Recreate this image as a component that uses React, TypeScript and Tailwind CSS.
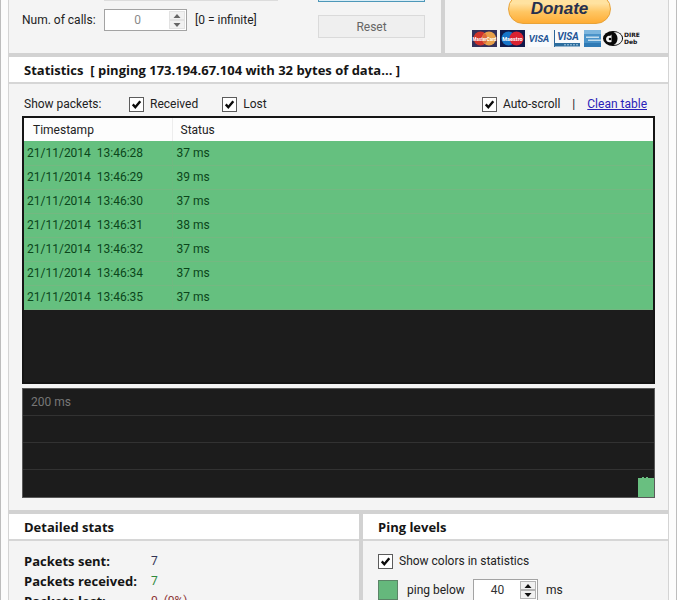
import { useState } from "react";
import type { ReactNode } from "react";

interface Packet {
  timestamp: string;
  status: string;
}

const packets: Packet[] = [
  { timestamp: "21/11/2014  13:46:28", status: "37 ms" },
  { timestamp: "21/11/2014  13:46:29", status: "39 ms" },
  { timestamp: "21/11/2014  13:46:30", status: "37 ms" },
  { timestamp: "21/11/2014  13:46:31", status: "38 ms" },
  { timestamp: "21/11/2014  13:46:32", status: "37 ms" },
  { timestamp: "21/11/2014  13:46:34", status: "37 ms" },
  { timestamp: "21/11/2014  13:46:35", status: "37 ms" },
];

const samples = [37, 37, 39, 37, 38, 37, 37, 37];

function Check({ id, label }: { id: string; label: string }) {
  const [checked, setChecked] = useState(true);
  return (
    <div className="flex items-center gap-[6px]">
      <span className="grid h-[15px] w-[15px]">
        <input
          id={id}
          type="checkbox"
          checked={checked}
          onChange={(e) => setChecked(e.target.checked)}
          className="col-start-1 row-start-1 h-[15px] w-[15px] appearance-none border border-[#5c5c5c] bg-white"
        />
        {checked && (
          <svg
            viewBox="0 0 15 15"
            className="pointer-events-none col-start-1 row-start-1 h-[15px] w-[15px]"
          >
            <path d="M3.8 7.4 6.3 10.2 11.3 4.2" fill="none" stroke="#0a0a0a" strokeWidth="2.4" />
          </svg>
        )}
      </span>
      <label htmlFor={id}>{label}</label>
    </div>
  );
}

interface SpinnerProps {
  id: string;
  label: string;
  initial: number;
  muted?: boolean;
}

function Spinner({ id, label, initial, muted }: SpinnerProps) {
  const [value, setValue] = useState(initial);
  const arrow = muted ? "#666666" : "#111111";
  const edge = muted ? "border-[#e2e2e2]" : "border-[#b4b4b4]";
  return (
    <div className="flex h-[22px] border border-[#a3a3a3] bg-white p-px">
      <input
        id={id}
        aria-label={label}
        inputMode="numeric"
        value={value}
        onChange={(e) => setValue(Number(e.target.value) || 0)}
        className={`min-w-0 flex-1 bg-white text-center outline-none ${
          muted ? "text-[#8a8a8a]" : "text-[#333333]"
        }`}
      />
      <div className="flex w-4 flex-col">
        <button
          aria-label={`Increase ${label}`}
          onClick={() => setValue(value + 1)}
          className={`flex flex-1 items-center justify-center border bg-[#f1f1f1] ${edge}`}
        >
          <svg viewBox="0 0 8 4" className="h-1 w-2">
            <path d="M0.500 4 4 0 7.500 4z" fill={arrow} />
          </svg>
        </button>
        <button
          aria-label={`Decrease ${label}`}
          onClick={() => setValue(Math.max(0, value - 1))}
          className={`flex flex-1 items-center justify-center border bg-[#f1f1f1] ${edge}`}
        >
          <svg viewBox="0 0 8 4" className="h-1 w-2">
            <path d="M0.500 0 4 4 7.500 0z" fill={arrow} />
          </svg>
        </button>
      </div>
    </div>
  );
}

function SectionTitle({ children }: { children: ReactNode }) {
  return (
    <h2 className="flex h-[27px] items-center border-b-2 border-[#d6d6d6] bg-white px-[15px] font-['Open_Sans','Noto_Sans',sans-serif] text-[13px] font-bold whitespace-pre text-[#151515]">
      {children}
    </h2>
  );
}

function PaymentCards() {
  return (
    <svg viewBox="0 0 170 17" className="h-[17px] w-[170px]" role="img" aria-label="Accepted cards">
      {/* MasterCard */}
      <rect x="0" y="0" width="25" height="17" fill="#33305a" />
      <circle cx="8.500" cy="8.500" r="7" fill="#d0342c" />
      <circle cx="17" cy="8.500" r="7" fill="#e8a04a" />
      <path d="M12.800 3a7 7 0 0 1 0 11a7 7 0 0 1 0-11z" fill="#dc6a3a" />
      <text x="12.500" y="10.500" fontSize="4.500" fontWeight="700" textAnchor="middle" fill="#fff">MasterCard</text>
      {/* Maestro */}
      <rect x="28" y="0" width="25" height="17" fill="#101a4c" />
      <circle cx="36.500" cy="8.500" r="7" fill="#1674c8" />
      <circle cx="44.500" cy="8.500" r="7" fill="#d92231" />
      <text x="40.500" y="10.500" fontSize="5.500" fontWeight="700" textAnchor="middle" fill="#fff">Maestro</text>
      {/* Visa */}
      <rect x="56" y="0" width="23" height="17" fill="#f8fafc" />
      <text x="67" y="12" fontSize="9.500" fontWeight="700" fontStyle="italic" textAnchor="middle" fill="#1f5596">VISA</text>
      {/* Visa Electron */}
      <rect x="82" y="0" width="26" height="17" fill="#f8fafc" />
      <rect x="82" y="0" width="1" height="17" fill="#2d6598" />
      <text x="96" y="10" fontSize="10" fontWeight="700" fontStyle="italic" textAnchor="middle" fill="#1f5596">VISA</text>
      <rect x="82" y="13" width="26" height="3.500" fill="#2c6d9e" />
      <path d="M92 14.800h14" stroke="#a9cce2" strokeWidth="1" strokeDasharray="2 1" />
      {/* American Express */}
      <rect x="112" y="0" width="17" height="17" fill="#4a93c9" />
      <rect x="112" y="0" width="17" height="4" fill="#7db6de" />
      <rect x="112" y="13" width="17" height="4" fill="#2f7ab5" />
      <path d="M114 7.200h13M116 10.200h13" stroke="#c3deef" strokeWidth="1.600" />
      {/* Direct Debit */}
      <ellipse cx="141" cy="8.500" rx="10" ry="7.500" fill="#080808" />
      <path d="M141.500 2c6 0 8.500 3 8.500 6.500s-3 6.500-8.500 6.500c3-1.500 4-4 4-6.500s-1-5-4-6.500z" fill="#f5f5f5" />
      <path d="M139.500 4.500v7.500c-3 1-5.500-.5-5.500-3s2.500-4 4-3z" fill="#f5f5f5" />
      <circle cx="138" cy="9" r="1.300" fill="#080808" />
      <text x="152" y="7" fontSize="6" fontWeight="700" fontFamily="DejaVu Sans" fill="#111">DIRE</text>
      <text x="152" y="14" fontSize="6" fontWeight="700" fontFamily="DejaVu Sans" fill="#111">Deb</text>
    </svg>
  );
}

function TopBar() {
  return (
    <div className="-mt-6 flex bg-[#f4f4f4]">
      <div className="flex flex-1 items-start justify-between border-r-4 border-[#d2d2d2] pr-4 pl-[13px]">
        <div className="flex flex-col gap-2">
          <input
            aria-label="Address"
            disabled
            className="ml-[82px] h-[25px] w-[174px] border border-[#dcdcdc] bg-[#f0f0f0]"
          />
          <div className="flex items-center">
            <label htmlFor="calls" className="w-[82px] whitespace-nowrap">
              Num. of calls:
            </label>
            <div className="w-[83px]">
              <Spinner id="calls" label="Num. of calls" initial={0} muted />
            </div>
            <span className="ml-2">[0 = infinite]</span>
          </div>
        </div>
        <div className="flex w-[107px] flex-col gap-[13px]">
          <button aria-label="Start" className="h-[26px] border border-[#4d97b8] bg-[#d8edf7]" />
          <button className="h-[23px] border border-[#dadada] bg-[#efefef] text-[#666666]">
            Reset
          </button>
        </div>
      </div>
      <div className="flex w-[223px] flex-col items-start gap-[6px] pt-[18px] pb-[6px] pl-[27px]">
        <button className="ml-9 h-[30px] w-[103px] rounded-full border border-[#e8a339] bg-linear-to-b from-[#ffe2a0] from-30% via-[#ffc662] via-60% to-[#ffad33] font-['Liberation_Sans',sans-serif] text-[17px] font-bold text-[#26304f] italic">
          Donate
        </button>
        <PaymentCards />
      </div>
    </div>
  );
}

function PacketTable() {
  return (
    <div className="h-[268px] overflow-hidden border-2 border-[#151515] bg-[#1c1c1c]">
      <table className="w-full border-collapse text-left">
        <thead className="bg-[#fdfdfd]">
          <tr className="h-[23px]">
            <th className="w-[148px] border-r border-[#ededed] pl-[9px] font-normal">Timestamp</th>
            <th className="pl-2 font-normal">Status</th>
          </tr>
        </thead>
        <tbody className="bg-[#65c07f] text-[#0b461b]">
          {packets.map((packet) => (
            <tr key={packet.timestamp} className="h-6 border-b border-[#74b881]">
              <td className="border-r border-[#6dbb80] pl-[3px] whitespace-pre">
                {packet.timestamp}
              </td>
              <td className="pl-1">{packet.status}</td>
            </tr>
          ))}
        </tbody>
      </table>
    </div>
  );
}

function PingGraph() {
  return (
    <div className="grid h-[110px] border border-[#5a5a5a] bg-[#1c1c1c]">
      <div className="col-start-1 row-start-1 grid grid-rows-4">
        <div className="flex items-center border-b border-[#323232] pl-2 text-[#777777]">200 ms</div>
        <div className="border-b border-[#323232]" />
        <div className="border-b border-[#323232]" />
        <div />
      </div>
      <div className="col-start-1 row-start-1 flex items-end justify-end">
        {samples.map((ms, i) => (
          <div
            key={i}
            className="w-[2px] bg-[#69bf80]"
            style={{ height: Math.round(ms * 0.52) }}
          />
        ))}
      </div>
    </div>
  );
}

function Statistics() {
  return (
    <section className="border-y-4 border-[#d2d2d2]">
      <SectionTitle>{"Statistics  [ pinging 173.194.67.104 with 32 bytes of data... ]"}</SectionTitle>
      <div className="flex flex-col gap-1 px-[13px] pt-3 pb-3">
        <div className="flex h-4 items-center pr-2">
          <span className="w-[107px] pl-0.5">Show packets:</span>
          <div className="flex gap-6">
            <Check id="received" label="Received" />
            <Check id="lost" label="Lost" />
          </div>
          <div className="ml-auto flex items-center gap-3">
            <Check id="autoscroll" label="Auto-scroll" />
            <span>|</span>
            <a href="#" className="text-[#2a22b8] underline">
              Clean table
            </a>
          </div>
        </div>
        <PacketTable />
        <PingGraph />
      </div>
    </section>
  );
}

function DetailedStats() {
  const rows = [
    { label: "Packets sent:", value: "7", color: "text-[#333355]" },
    { label: "Packets received:", value: "7", color: "text-[#2f8a3c]" },
    { label: "Packets lost:", value: "0  (0%)", color: "text-[#8a3030]" },
  ];
  return (
    <section className="flex-1 border-r-4 border-[#d2d2d2]">
      <SectionTitle>Detailed stats</SectionTitle>
      <dl className="px-[15px] pt-[10px]">
        {rows.map((row) => (
          <div key={row.label} className="flex h-5 items-center">
            <dt className="w-[127px] font-['Open_Sans','Noto_Sans',sans-serif] text-[13px] font-bold text-[#151515]">
              {row.label}
            </dt>
            <dd className={`whitespace-pre ${row.color}`}>{row.value}</dd>
          </div>
        ))}
      </dl>
    </section>
  );
}

function PingLevels() {
  return (
    <section className="w-[305px]">
      <SectionTitle>Ping levels</SectionTitle>
      <div className="px-[15px] pt-3">
        <Check id="colors" label="Show colors in statistics" />
        <div className="mt-[10px] flex items-center">
          <span className="h-5 w-5 border border-[#5b8467] bg-[#65b87c]" />
          <label htmlFor="below" className="w-[75px] pl-[9px] whitespace-nowrap">
            ping below
          </label>
          <div className="w-[65px]">
            <Spinner id="below" label="ping below" initial={40} />
          </div>
          <span className="ml-2">ms</span>
        </div>
      </div>
    </section>
  );
}

export default function App() {
  return (
    <main className="h-screen overflow-hidden border-x border-[#bdbdbd] bg-[#fcfcfc] px-[7px] font-['Roboto',sans-serif] text-[12px] leading-4 text-[#222222]">
      <div className="flex min-h-full flex-col border-x border-[#d4d4d4] bg-[#f4f4f4]">
        <TopBar />
        <Statistics />
        <div className="flex flex-1">
          <DetailedStats />
          <PingLevels />
        </div>
      </div>
    </main>
  );
}
